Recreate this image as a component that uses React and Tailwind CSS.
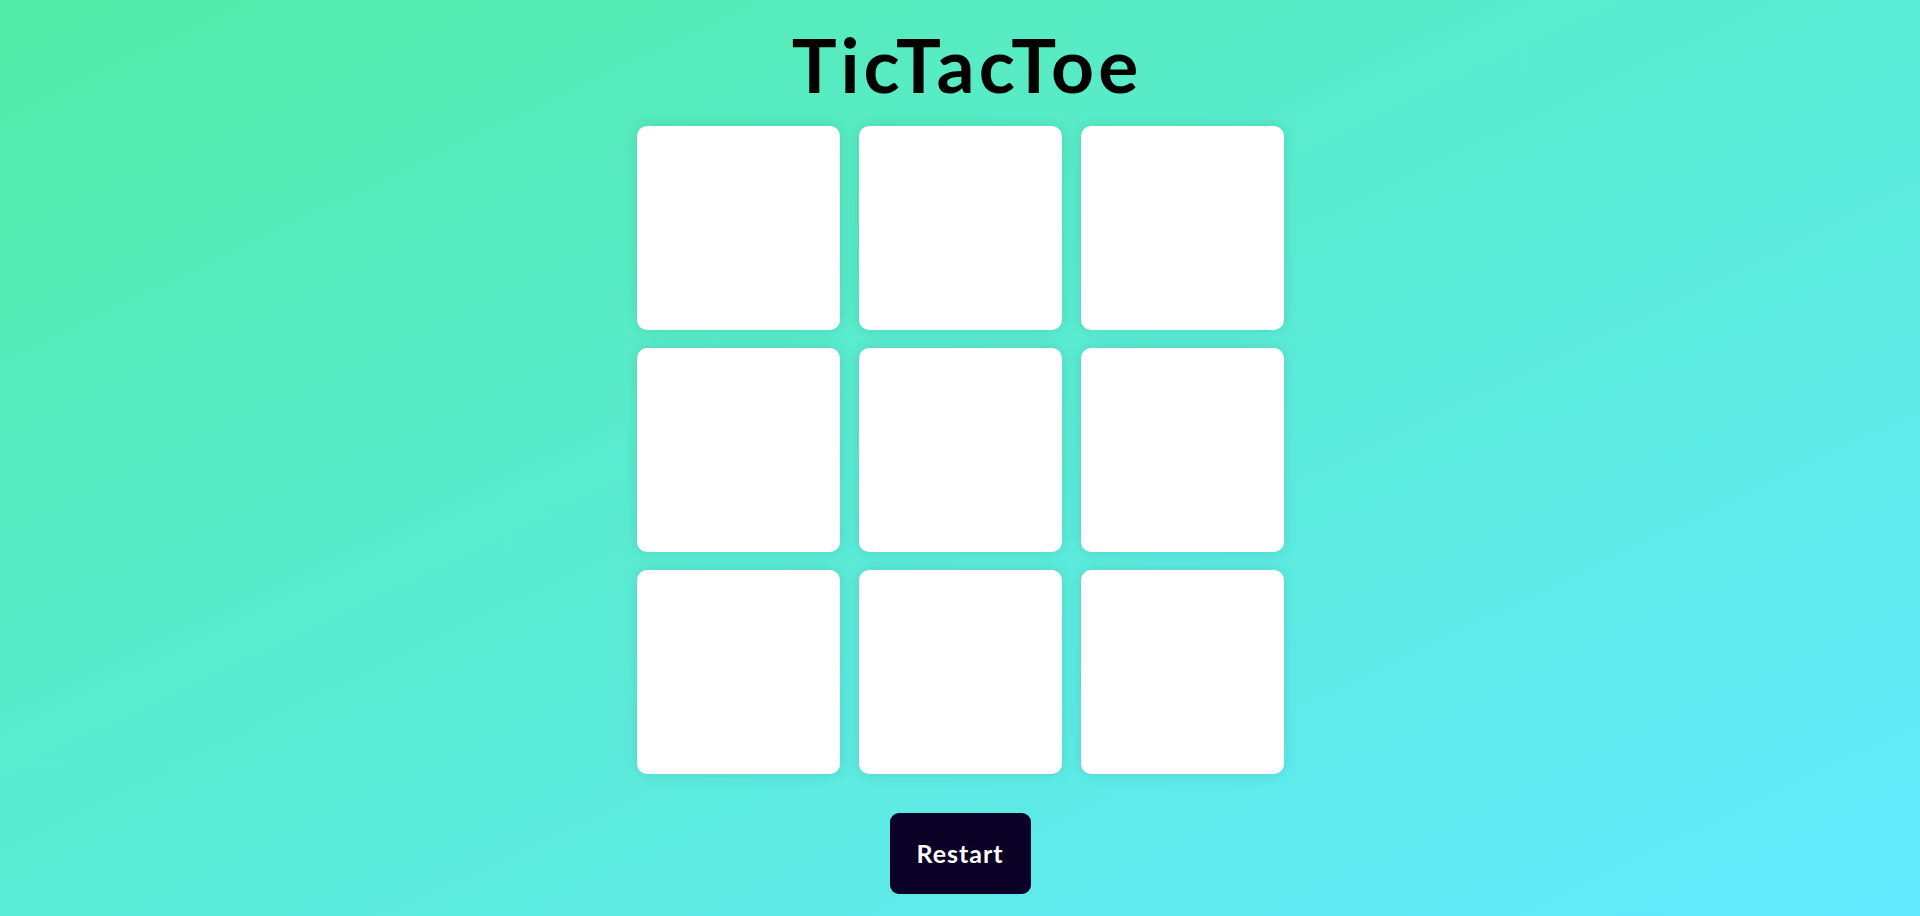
import React from "react";

export default function App() {
  const cells = Array.from({ length: 9 });
  return (
    <div className="min-h-[916px] w-full bg-linear-to-br from-[#53eca8] to-[#63e9ff] flex flex-col items-center" style={{ fontFamily: "Lato, 'Open Sans', sans-serif" }}>
      <h1 className="mt-[22px] pl-[14px] text-[75px] leading-[84px] font-bold text-black tracking-[4px]">TicTacToe</h1>
      <div className="mt-[20px] grid grid-cols-[repeat(3,203px)] gap-x-[19px] gap-y-[18px]">
        {cells.map((_, i) => (
          <div key={i} className="w-[203px] h-[204px] bg-white rounded-[10px] shadow-[0_0_14px_rgba(0,0,0,0.1)]" />
        ))}
      </div>
      <button className="mt-[39px] w-[141px] h-[81px] rounded-[9px] bg-[#0b0025] text-white text-[25px] font-bold tracking-[1px]">Restart</button>
    </div>
  );
}
